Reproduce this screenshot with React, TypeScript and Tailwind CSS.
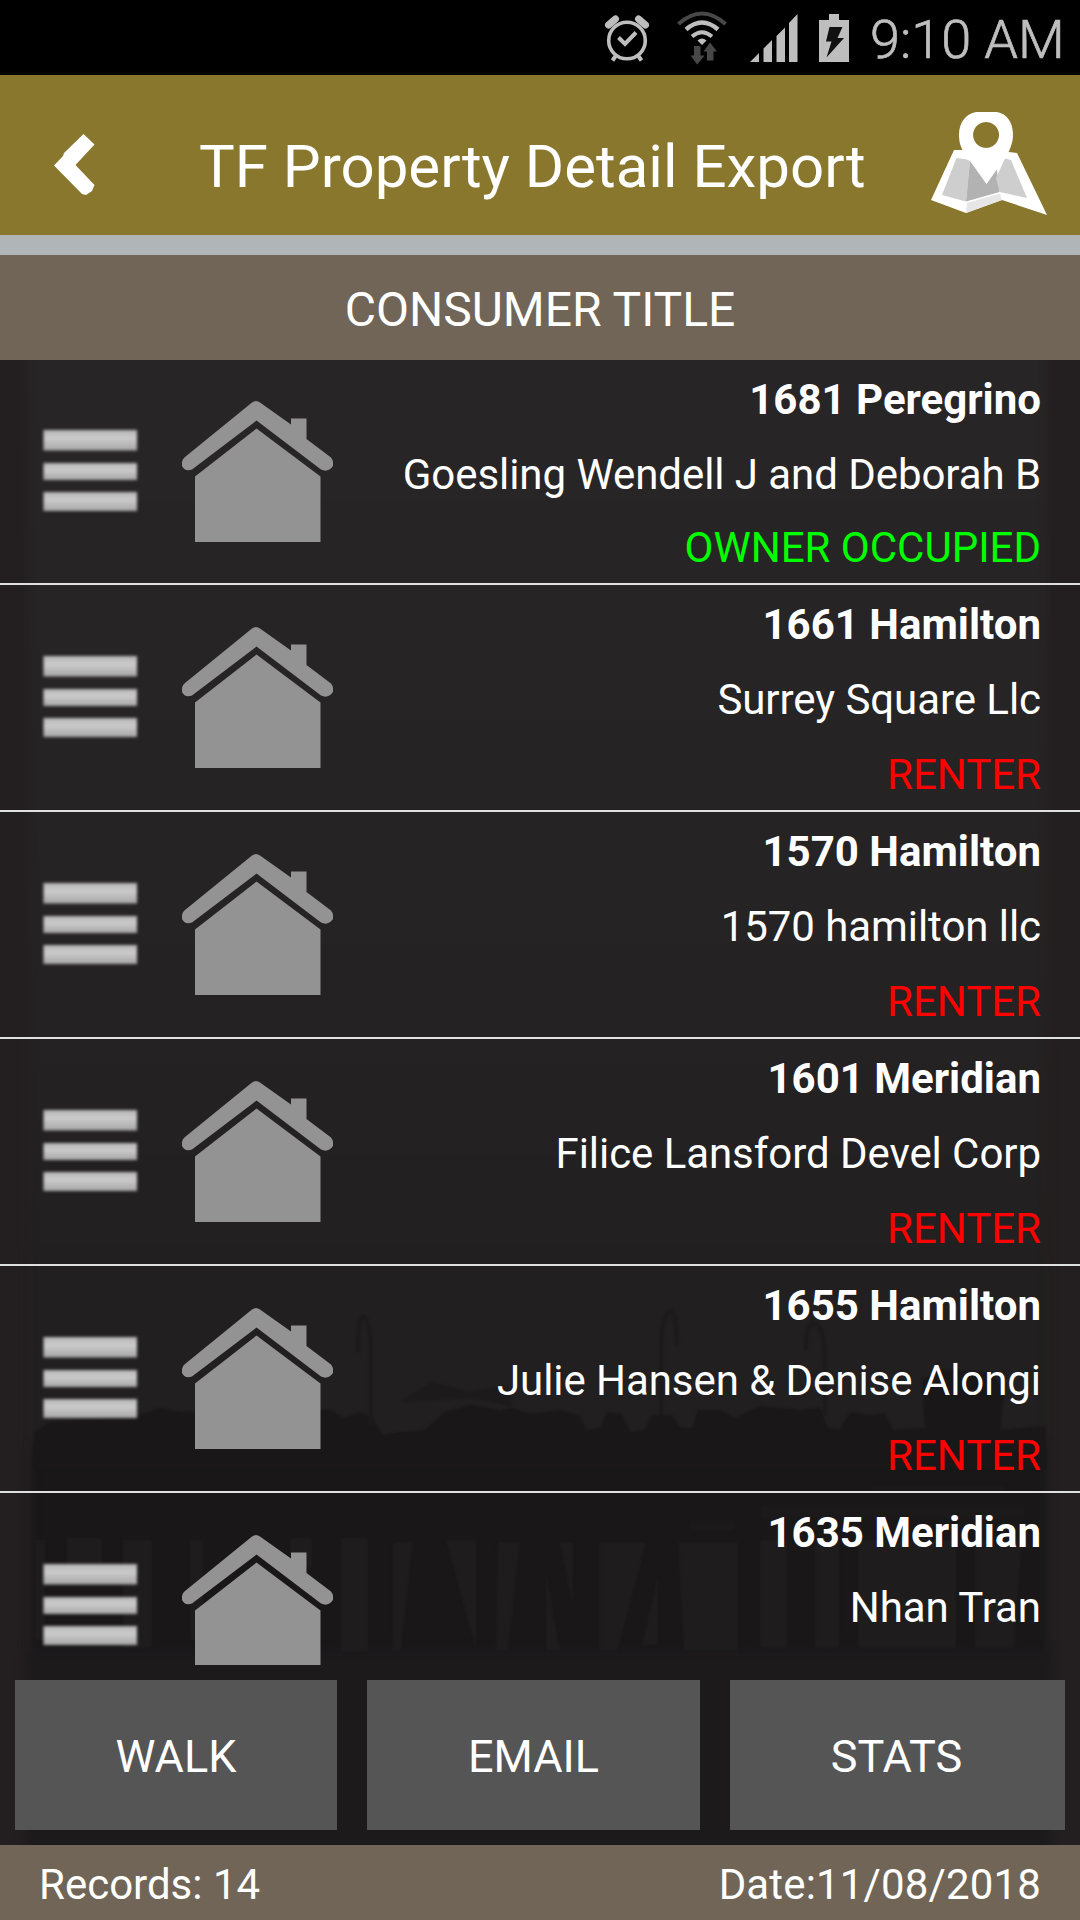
import { useState } from 'react';

type Occupancy = 'OWNER OCCUPIED' | 'RENTER';

interface PropertyRecord {
  address: string;
  owner: string;
  occupancy?: Occupancy;
}

const records: PropertyRecord[] = [
  { address: '1681 Peregrino', owner: 'Goesling Wendell J and Deborah B', occupancy: 'OWNER OCCUPIED' },
  { address: '1661 Hamilton', owner: 'Surrey Square Llc', occupancy: 'RENTER' },
  { address: '1570 Hamilton', owner: '1570 hamilton llc', occupancy: 'RENTER' },
  { address: '1601 Meridian', owner: 'Filice Lansford Devel Corp', occupancy: 'RENTER' },
  { address: '1655 Hamilton', owner: 'Julie Hansen & Denise Alongi', occupancy: 'RENTER' },
  { address: '1635 Meridian', owner: 'Nhan Tran' },
];

function AlarmIcon() {
  return (
    <svg className="ml-[604px] shrink-0" width="46" height="48" viewBox="0 0 46 48" fill="none" stroke="#bebebe">
      <circle cx="23" cy="26.5" r="18.3" strokeWidth="3.6" />
      <path d="M14.5 23.5 21 30 32 18.5" strokeWidth="4" />
      <path d="M4.5 11 11.5 5M41.5 11 34.5 5" strokeWidth="7" strokeLinecap="round" />
      <path d="M12 41.5 8.5 46.5M34 41.5 37.5 46.5" strokeWidth="4" />
    </svg>
  );
}

function WifiIcon() {
  return (
    <svg className="ml-[27px] shrink-0" width="50" height="54" viewBox="0 0 50 54" fill="none">
      <path d="M1.5 13Q25-8 48.5 13" stroke="#484848" strokeWidth="4" />
      <path d="M9 18.5Q25 4.5 41 18.5" stroke="#bebebe" strokeWidth="4.5" />
      <path d="M15 25.5Q25 17 35 25.5" stroke="#bebebe" strokeWidth="4" />
      <path d="M20.5 29.5Q25 25.5 29.5 29.5L25 34Z" fill="#bebebe" />
      <path d="M17 35h6.5v9.5h4L20.2 53.5 13.5 44.5H17ZM30 49.5V40.5h-3.5L33 31.5l7 9h-3.5v9Z" fill="#484848" />
    </svg>
  );
}

function SignalIcon() {
  return (
    <svg className="ml-[22px] shrink-0" width="50" height="48" viewBox="0 0 50 48" fill="#bebebe">
      <path d="M1 48 10 39V48ZM14.5 34.5 23 26V48H14.5ZM27.5 22 36 13.5V48H27.5ZM40 9 48.5 0V48H40Z" />
    </svg>
  );
}

function BatteryIcon() {
  return (
    <svg className="ml-[20px] shrink-0" width="30" height="48" viewBox="0 0 30 48">
      <path d="M10 0h10v6h10v42H0V6h10Z" fill="#bebebe" />
      <path d="M10.5 13h13L18.5 24H25L7.5 43.5 12.5 27.5H7Z" fill="#111" />
    </svg>
  );
}

function MapIcon() {
  return (
    <svg width="116" height="103" viewBox="0 0 116 103">
      <path d="M23 38 32 38 67 45 78 40 86 41 116 103 71 88 35 101 0 88Z" fill="#fff" />
      <path d="M25.5 46 36 47.5 39 49 35 89.5 11 83Z" fill="#cecece" />
      <path d="M39 49 65 50 68.5 80 35 89.5Z" fill="#b2b2b2" />
      <path d="M65 66 74 46.5 80 48 96 86 68.5 80Z" fill="#cecece" />
      <path d="M36 91 69 81.5 71 88 35 101Z" fill="#e6e6e6" />
      <path
        fillRule="evenodd"
        d="M45 0h21C76 2 82 10 82 23 82 31 79 36 77 42L55.5 72 34 42C30 36 28 31 28 23 28 10 35 2 45 0ZM55 10a13 13 0 1 0 .1 0Z"
        fill="#fff"
      />
    </svg>
  );
}

function BackIcon() {
  return (
    <svg width="42" height="62" viewBox="0 0 42 62" fill="#fff">
      <path d="M29.5 0 40.5 10.5 21.5 31 40.5 51 38 57 32 61 28 60 0 31.5 9 22 10 19Z" />
    </svg>
  );
}

function HouseIcon() {
  return (
    <svg className="ml-[41px] shrink-0" width="151" height="141" viewBox="0 0 151 141" fill="#939393">
      <path d="M70 1.5Q74 -1.5 78 1.5L109 23.5V17.5H124.5V38L149 56.5Q152 60.5 151 65 146 72 139 68.5L74.5 19.5 10 68.5Q3 71 0 65 -1 59 3 56Z" />
      <path d="M13 75.5 74.5 27.5 138.5 75.5V141H13Z" />
    </svg>
  );
}

function MenuBars() {
  return (
    <svg className="ml-[41px] shrink-0" width="100" height="90" viewBox="0 0 100 90">
      <defs>
        <linearGradient id="bar" x1="0" y1="0" x2="0" y2="1">
          <stop offset="0" stopColor="#b4b4b4" />
          <stop offset="0.4" stopColor="#cbcbcb" />
          <stop offset="1" stopColor="#a6a6a6" />
        </linearGradient>
        <filter id="soft" x="-10%" y="-20%" width="120%" height="140%">
          <feGaussianBlur stdDeviation="1.5" />
        </filter>
      </defs>
      <g fill="url(#bar)" filter="url(#soft)">
        <rect x="2.5" y="3" width="93.5" height="20.5" />
        <rect x="2.5" y="36" width="93.5" height="17" />
        <rect x="2.5" y="65" width="93.5" height="19" />
      </g>
    </svg>
  );
}

// Dimmed pier scene behind the list
function Backdrop() {
  return (
    <svg className="absolute inset-0 -z-10" width="1080" height="1485" viewBox="0 0 1080 1485">
      <defs>
        <linearGradient id="sky" x1="0" y1="0" x2="0" y2="1">
          <stop offset="0" stopColor="#282526" />
          <stop offset="0.5" stopColor="#252223" />
          <stop offset="0.7" stopColor="#211f1f" />
        </linearGradient>
        <filter id="haze" colorInterpolationFilters="sRGB">
          <feGaussianBlur stdDeviation="5" />
        </filter>
        <filter id="grain" colorInterpolationFilters="sRGB">
          <feGaussianBlur stdDeviation="1" />
        </filter>
      </defs>
      <rect width="1080" height="1485" fill="#231f20" />
      <rect x="28" y="-20" width="1020" height="1330" fill="url(#sky)" filter="url(#haze)" />
      <rect x="32" y="1085" width="1014" height="220" fill="#191718" filter="url(#haze)" />
      <rect x="26" y="1290" width="1024" height="220" fill="#1c1a1b" filter="url(#haze)" />
      <g filter="url(#grain)">
        {/* crowd and trees on the deck */}
        <path
          d="M34 1090V1072L50 1062 140 1055 160 1048 180 1052 330 1050 345 1058 360 1052 372 1058 382 1075 400 1072 425 1070 445 1052 470 1045 500 1050 512 1048 530 1054 560 1050 580 1056 586 1070 600 1068 608 1052 622 1054 630 1072 645 1070 652 1055 672 1055 680 1068 692 1068 698 1050 720 1050 735 1058 760 1046 800 1050 820 1048 828 1068 840 1070 850 1052 870 1055 885 1053 893 1070 925 1068 922 1020 940 1010 990 1012 1004 1030 1000 1070 1046 1066V1110H34Z"
          fill="#191718"
        />
        <path d="M400 1042 432 1022 468 1032 510 1026 512 1046 470 1038Z" fill="#1c1a1b" />
        {/* lamp posts */}
        <g fill="none" stroke="#1c1a1b" strokeWidth="4">
          <path d="M371 1065V985Q369 957 363 957 358 958 358 992" />
          <path d="M661 1055V985Q663 951 671 951 677 955 677 985" />
          <path d="M825 1055V995Q823 963 813 963 806 966 806 990" />
        </g>
        {/* water seen between the pilings */}
        <path
          d="M35 1180h10v100H35ZM67 1178h35v30H67ZM123 1180h29v108h-29ZM190 1180h13v100h-13ZM290 1178h22v30h-22ZM341 1178h27v114h-27ZM393 1182h20L401 1290h-8ZM446 1180h30v110ZM498 1182h22l-12 108h-12ZM560 1182h13v65ZM599 1182h47l-28 108h-19ZM546 1212l14 78h-14ZM658 1215v70h-16ZM678 1182h60v108h-54ZM760 1180h27v108h-27ZM815 1180h24v108h-24ZM858 1180h98v108h-98ZM975 1180h47l-8 108h-39Z"
          fill="#1e1c1d"
        />
        <path d="M690 1160h45v12h-45ZM760 1145h265v14H760ZM870 1125h135v8H870Z" fill="#1b191a" />
      </g>
    </svg>
  );
}

function PropertyRow({ record, first }: { record: PropertyRecord; first: boolean }) {
  const tone = record.occupancy === 'RENTER' ? 'text-[#ff0000]' : 'text-[#00ff00]';
  return (
    <li className={`flex shrink-0 items-center border-b-2 border-[#e0e0e0] ${first ? 'h-[225px]' : 'h-[227px]'}`}>
      <MenuBars />
      <HouseIcon />
      <div className="grid h-full flex-1 grid-rows-3 items-center pr-[39px] text-right text-[42px] leading-[45px]">
        <p className={`font-bold ${first ? 'pt-[5px]' : 'pt-[3px]'}`}>{record.address}</p>
        <p className={`tracking-[-0.06px] ${first ? 'pt-[6px]' : 'pt-[3px]'}`}>{record.owner}</p>
        {record.occupancy && <p className="pt-[3px]">{record.occupancy && <span className={tone}>{record.occupancy}</span>}</p>}
      </div>
    </li>
  );
}

export default function App() {
  const [recordCount] = useState(14);

  return (
    <div className="flex h-[1920px] w-[1080px] flex-col overflow-hidden bg-[#231f20] font-[Roboto,sans-serif] text-white">
      <div className="flex h-[75px] items-center bg-black text-[#bebebe]">
        <AlarmIcon />
        <WifiIcon />
        <SignalIcon />
        <BatteryIcon />
        <span className="ml-[21px] pt-[5px] text-[54px] leading-none font-light whitespace-nowrap [-webkit-text-stroke:0.7px_#bebebe]">
          9:10 AM
        </span>
      </div>

      <header className="flex h-40 items-center bg-[#89772d] pt-[17px]">
        <button className="ml-[54px] pt-0.5">
          <BackIcon />
        </button>
        <h1 className="ml-[103px] w-[668px] pt-[7px] text-[60px] leading-none whitespace-nowrap">TF Property Detail Export</h1>
        <button className="ml-[64px]">
          <MapIcon />
        </button>
      </header>
      <div className="h-5 bg-[#b0b5b8]" />
      <h2 className="flex h-[105px] items-center justify-center bg-[#706556] pt-1 text-[48px]">CONSUMER TITLE</h2>

      <main className="relative isolate flex h-[1485px] flex-col">
        <Backdrop />
        <ul className="flex h-[1305px] flex-col overflow-hidden">
          {records.map((record, i) => (
            <PropertyRow key={record.address} record={record} first={i === 0} />
          ))}
        </ul>
        <div className="mx-[15px] mt-[15px] grid h-[150px] grid-cols-[322px_333px_335px] gap-[30px] text-[45px]">
          <button className="bg-[#555] pt-1">WALK</button>
          <button className="bg-[#555] pt-1">EMAIL</button>
          <button className="bg-[#555] pt-1 pr-0.5">STATS</button>
        </div>
      </main>

      <footer className="flex h-[75px] items-center justify-between bg-[#706556] pt-1 pr-[39px] pl-[39px] text-[42px]">
        <span>Records: {recordCount}</span>
        <span className="tracking-[0.15px]">Date:11/08/2018</span>
      </footer>
    </div>
  );
}
